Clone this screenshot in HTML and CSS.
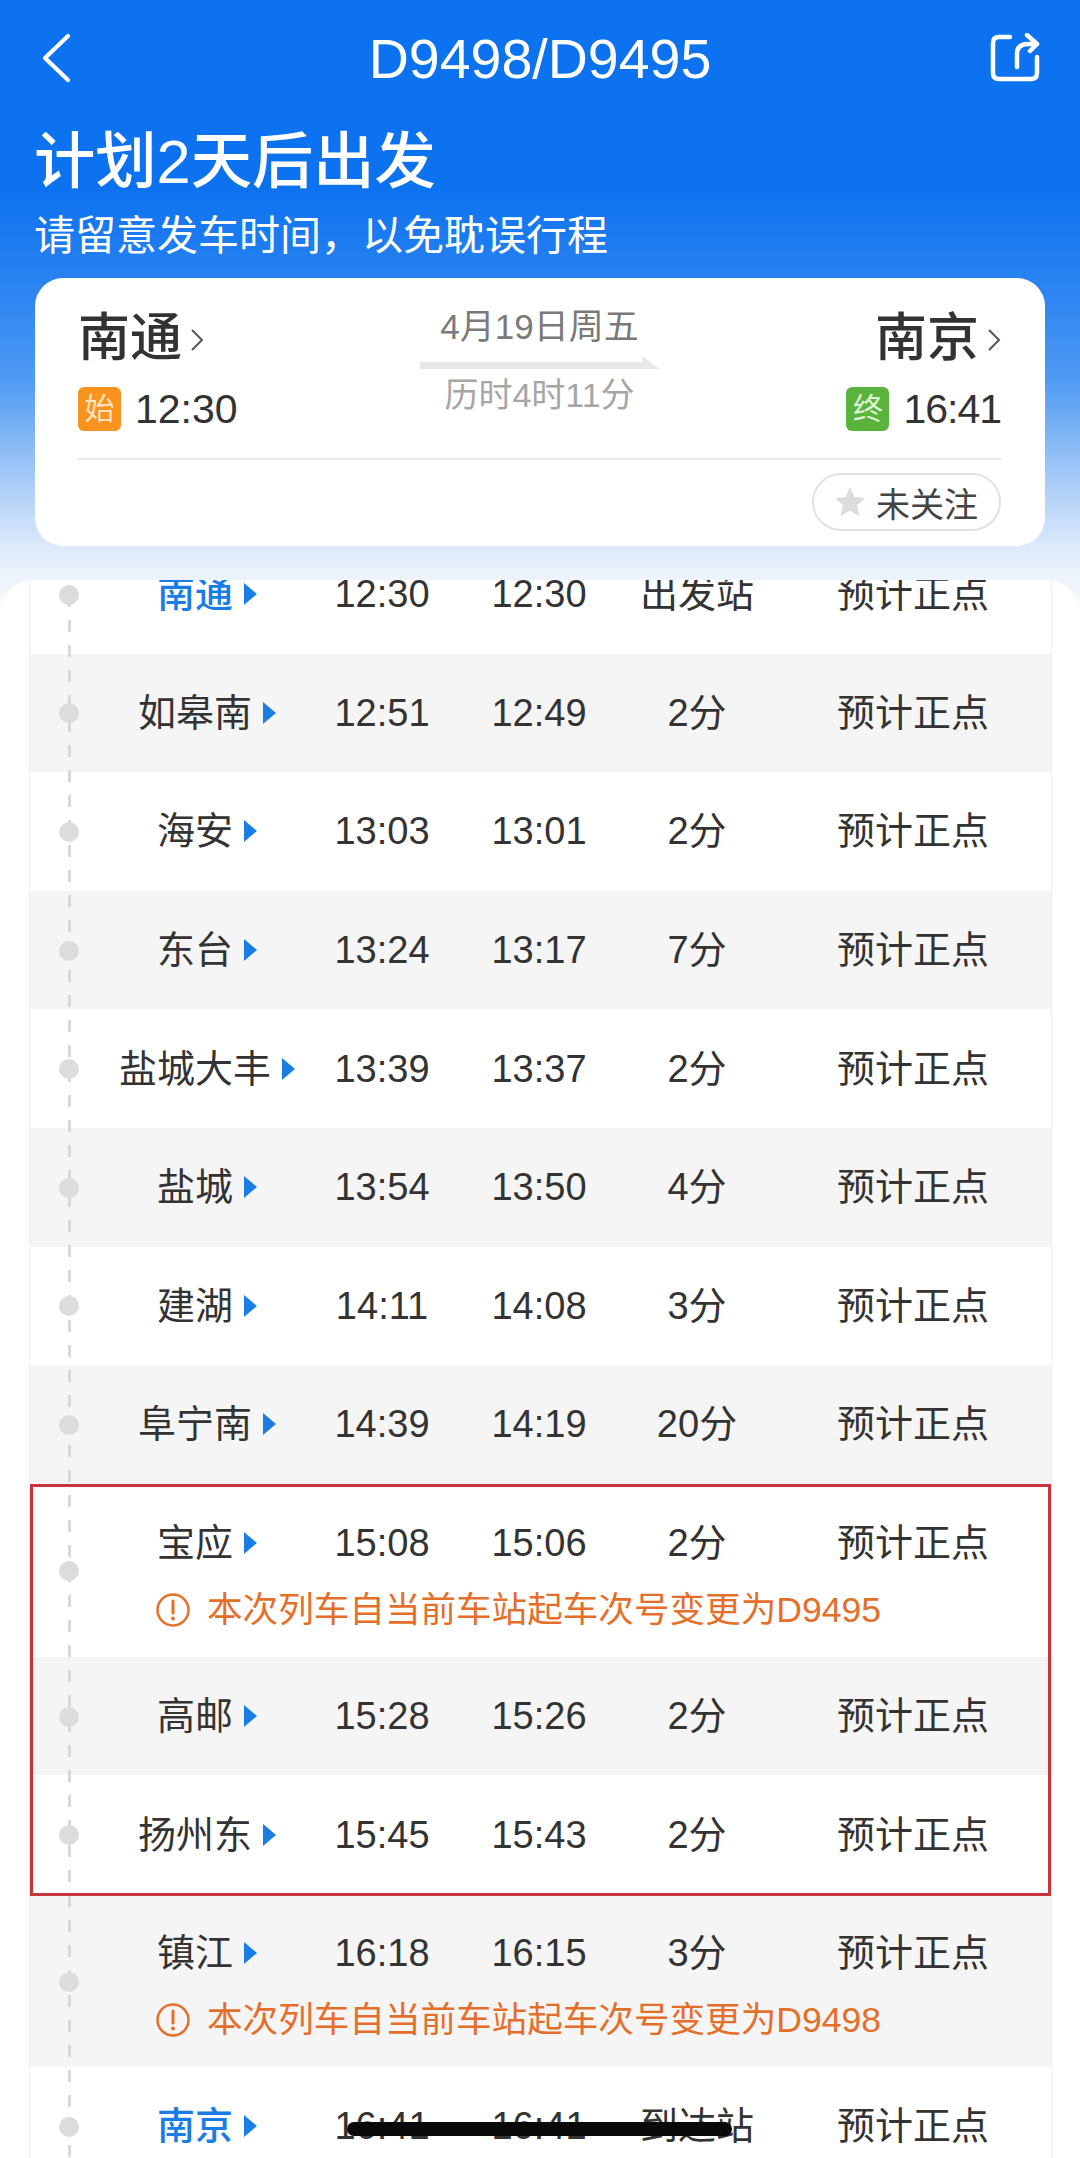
FILE: index.html
```html
<!DOCTYPE html>
<html lang="zh-CN">
<head>
<meta charset="utf-8">
<title>D9498/D9495</title>
<link rel="stylesheet" href="styles.css">
</head>
<body>
<div class="page">
  <header class="top">
    <nav class="nav">
      <svg class="nav-back" width="32" height="50" viewBox="0 0 32 50"><path d="M28 3 L5 25 L28 47" fill="none" stroke="#fff" stroke-width="4.2" stroke-linecap="round" stroke-linejoin="round"/></svg>
      <div class="nav-title">D9498/D9495</div>
      <svg class="nav-share" width="50" height="50" viewBox="0 0 50 50"><path d="M20 4 H9 Q3 4 3 10 V40 Q3 46 9 46 H41 Q47 46 47 40 V24" fill="none" stroke="#fff" stroke-width="4.5" stroke-linecap="round"/><path d="M27 34 V21 Q27 11 38 11 H47 M37 2 L47 11 L40 18" fill="none" stroke="#fff" stroke-width="4.5" stroke-linecap="round" stroke-linejoin="round"/></svg>
    </nav>
    <h1 class="headline">计划2天后出发</h1>
    <p class="subline">请留意发车时间，以免耽误行程</p>
    <section class="card">
      <div class="route">
        <div class="end">
          <div class="city">南通<svg class="chev" width="14" height="24" viewBox="0 0 14 24"><path d="M2 2 L12 12 L2 22" fill="none" stroke="#555" stroke-width="2"/></svg></div>
          <div class="when"><span class="tag tag-start">始</span><span>12:30</span></div>
        </div>
        <div class="mid">
          <div class="mid-date">4月19日周五</div>
          <div class="mid-arrow"></div>
          <div class="mid-dur">历时4时11分</div>
        </div>
        <div class="end end-right">
          <div class="city">南京<svg class="chev" width="14" height="24" viewBox="0 0 14 24"><path d="M2 2 L12 12 L2 22" fill="none" stroke="#555" stroke-width="2"/></svg></div>
          <div class="when"><span class="tag tag-end">终</span><span class="tight">16:41</span></div>
        </div>
      </div>
      <div class="card-foot">
        <div class="follow">
          <svg width="30" height="30" viewBox="0 0 30 30"><path d="M15 1 L19 10.5 L29 11.5 L21.5 18.5 L24 28.5 L15 23 L6 28.5 L8.5 18.5 L1 11.5 L11 10.5 Z" fill="#dcdcdc" stroke="#dcdcdc" stroke-linejoin="round"/></svg>
          <span>未关注</span>
        </div>
      </div>
    </section>
  </header>

  <main class="panel">
    <div class="table">
      <div class="row">
        <div class="cells"><span class="name name-link">南通<i class="tri"></i></span><span>12:30</span><span>12:30</span><span>出发站</span><span>预计正点</span></div>
      </div>
      <div class="row alt">
        <div class="cells"><span class="name">如皋南<i class="tri"></i></span><span>12:51</span><span>12:49</span><span>2分</span><span>预计正点</span></div>
      </div>
      <div class="row">
        <div class="cells"><span class="name">海安<i class="tri"></i></span><span>13:03</span><span>13:01</span><span>2分</span><span>预计正点</span></div>
      </div>
      <div class="row alt">
        <div class="cells"><span class="name">东台<i class="tri"></i></span><span>13:24</span><span>13:17</span><span>7分</span><span>预计正点</span></div>
      </div>
      <div class="row">
        <div class="cells"><span class="name">盐城大丰<i class="tri"></i></span><span>13:39</span><span>13:37</span><span>2分</span><span>预计正点</span></div>
      </div>
      <div class="row alt">
        <div class="cells"><span class="name">盐城<i class="tri"></i></span><span>13:54</span><span>13:50</span><span>4分</span><span>预计正点</span></div>
      </div>
      <div class="row">
        <div class="cells"><span class="name">建湖<i class="tri"></i></span><span>14:11</span><span>14:08</span><span>3分</span><span>预计正点</span></div>
      </div>
      <div class="row alt">
        <div class="cells"><span class="name">阜宁南<i class="tri"></i></span><span>14:39</span><span>14:19</span><span>20分</span><span>预计正点</span></div>
      </div>
      <div class="group">
        <div class="row row-note">
          <div class="cells"><span class="name">宝应<i class="tri"></i></span><span>15:08</span><span>15:06</span><span>2分</span><span>预计正点</span></div>
          <div class="note"><svg width="34" height="34" viewBox="0 0 34 34"><circle cx="17" cy="17" r="15.5" fill="none" stroke="#e46f2b" stroke-width="2.5"/><path d="M17 8 V20" stroke="#e46f2b" stroke-width="3" stroke-linecap="round"/><circle cx="17" cy="25.5" r="1.9" fill="#e46f2b"/></svg><span>本次列车自当前车站起车次号变更为D9495</span></div>
        </div>
        <div class="row alt">
          <div class="cells"><span class="name">高邮<i class="tri"></i></span><span>15:28</span><span>15:26</span><span>2分</span><span>预计正点</span></div>
        </div>
        <div class="row">
          <div class="cells"><span class="name">扬州东<i class="tri"></i></span><span>15:45</span><span>15:43</span><span>2分</span><span>预计正点</span></div>
        </div>
      </div>
      <div class="row alt row-note row-note-last">
        <div class="cells"><span class="name">镇江<i class="tri"></i></span><span>16:18</span><span>16:15</span><span>3分</span><span>预计正点</span></div>
        <div class="note"><svg width="34" height="34" viewBox="0 0 34 34"><circle cx="17" cy="17" r="15.5" fill="none" stroke="#e46f2b" stroke-width="2.5"/><path d="M17 8 V20" stroke="#e46f2b" stroke-width="3" stroke-linecap="round"/><circle cx="17" cy="25.5" r="1.9" fill="#e46f2b"/></svg><span>本次列车自当前车站起车次号变更为D9498</span></div>
      </div>
      <div class="row">
        <div class="cells"><span class="name name-link">南京<i class="tri"></i></span><span>16:41</span><span>16:41</span><span>到达站</span><span>预计正点</span></div>
      </div>
    </div>
  </main>
  <div class="home-bar"></div>
</div>
</body>
</html>
```
FILE: styles.css
```css
* { box-sizing: border-box; }
html, body { margin: 0; padding: 0; }
body {
  font-family: "Liberation Sans", "Noto Sans CJK SC", sans-serif;
  color: #333;
  background: #fff;
}
.page {
  position: relative;
  width: 1080px;
  height: 2158px;
  overflow: hidden;
  background: #fff;
}
.top {
  height: 620px;
  padding: 0 35px;
  background: linear-gradient(180deg, #0d72ef 0, #0d72ef 190px, #2f86f2 300px, #4f9bf3 380px, #a7cbf7 480px, #dce9fb 546px, #eef4fc 580px, #fff 620px);
}
.nav {
  height: 116px;
  display: grid;
  grid-template-columns: 1fr auto 1fr;
  align-items: center;
  color: #fff;
}
.nav-back { margin-left: 5px; }
.nav-share { justify-self: end; margin-right: 5px; }
.nav-title {
  margin-top: 2px;
  font-size: 55.5px;
  line-height: 114px;
}
.headline {
  margin: 0 0 0 -1px;
  font-size: 61.3px;
  font-weight: 500;
  line-height: 92px;
  color: #fff;
}
.subline {
  margin: 0 0 0 -1px;
  font-size: 41px;
  line-height: 56px;
  color: #fff;
  height: 70px;
}
.card {
  height: 268px;
  padding: 24px 44px 0 43px;
  background: #fff;
  border-radius: 28px;
}
.route {
  display: flex;
  justify-content: space-between;
  height: 158px;
  border-bottom: 2px solid #e8e8e8;
}
.end { display: flex; flex-direction: column; gap: 13px; }
.end-right { align-items: flex-end; }
.city {
  display: flex;
  align-items: center;
  gap: 8px;
  font-size: 52px;
  font-weight: 500;
  line-height: 72px;
}
.chev { flex: none; margin-top: 4px; }
.when {
  display: flex;
  align-items: center;
  gap: 14px;
  font-size: 41px;
  line-height: 44px;
}
.tight { letter-spacing: -1px; }
.tag {
  width: 43px;
  height: 44px;
  border-radius: 6px;
  font-size: 30px;
  line-height: 44px;
  text-align: center;
}
.tag-start { background: #f7931e; color: #ffe3c0; }
.tag-end { background: #5ab33c; color: #dff5d5; }
.mid {
  display: flex;
  flex-direction: column;
  align-items: center;
  width: 240px;
  margin-right: 5px;
}
.mid-date { font-size: 35px; color: #7a7a7a; line-height: 44px; margin-top: 3px; white-space: nowrap; }
.mid-arrow {
  width: 240px;
  height: 13px;
  margin-top: 7px;
  background: #e8e8e8;
  clip-path: polygon(0 6px, 223px 6px, 223px 0, 240px 13px, 0 13px);
}
.mid-dur { font-size: 34px; color: #a6a6a6; line-height: 44px; margin-top: 4px; white-space: nowrap; }
.card-foot { display: flex; justify-content: flex-end; padding-top: 13px; }
.follow {
  display: flex;
  align-items: center;
  gap: 11px;
  width: 189px;
  height: 58px;
  padding-left: 21px;
  border: 2px solid #e2e2e2;
  border-radius: 29px;
  font-size: 34px;
  color: #444;
}
.panel {
  margin-top: -40px;
  height: 1578px;
  position: relative;
  overflow: hidden;
  padding: 0 28px 0 29px;
  background: #fff;
  border-radius: 34px 34px 0 0;
}
.table {
  position: relative;
  margin-top: -45px;
  border-left: 1px solid #f0f0f0;
  border-right: 1px solid #f0f0f0;
}
.table::after {
  content: "";
  position: absolute;
  left: 38px;
  top: 60px;
  bottom: 0;
  width: 3px;
  background: repeating-linear-gradient(180deg, #d8d8d8 0, #d8d8d8 12px, transparent 12px, transparent 25px);
  z-index: 2;
}
.row {
  position: relative;
  height: 118.6px;
  background: #fff;
  padding-left: 80px;
  display: flex;
  flex-direction: column;
  justify-content: center;
}
.row.alt { background: #f5f5f5; }
.row::before {
  content: "";
  position: absolute;
  left: 29px;
  top: 50%;
  width: 20px;
  height: 20px;
  margin-top: -9.5px;
  border-radius: 50%;
  background: #dcdcdc;
  z-index: 3;
}
.row-note { height: 173px; justify-content: flex-start; padding-top: 29px; }
.row-note-last { height: 171px; padding-top: 27px; }
.cells {
  display: grid;
  grid-template-columns: 194px 156px 158px 158px 274px;
  font-size: 38px;
  line-height: 60px;
  text-align: center;
  color: #333;
}
.name { display: flex; justify-content: center; align-items: center; gap: 11px; }
.name-link { color: #1a7de6; font-weight: 500; }
.tri {
  width: 0;
  height: 0;
  border-left: 13px solid #1a7de6;
  border-top: 11px solid transparent;
  border-bottom: 11px solid transparent;
}
.note {
  display: flex;
  align-items: center;
  gap: 17px;
  margin-top: 12px;
  margin-left: 46px;
  font-size: 35.6px;
  line-height: 50px;
  color: #e46f2b;
  white-space: nowrap;
}
.group { position: relative; padding-bottom: 2px; }
.group::after {
  content: "";
  position: absolute;
  inset: 0;
  border: 3px solid #c8343c;
  z-index: 5;
}
.home-bar {
  position: absolute;
  left: 347px;
  top: 2122px;
  width: 385px;
  height: 14px;
  border-radius: 7px;
  background: #0a0a0a;
}
```
